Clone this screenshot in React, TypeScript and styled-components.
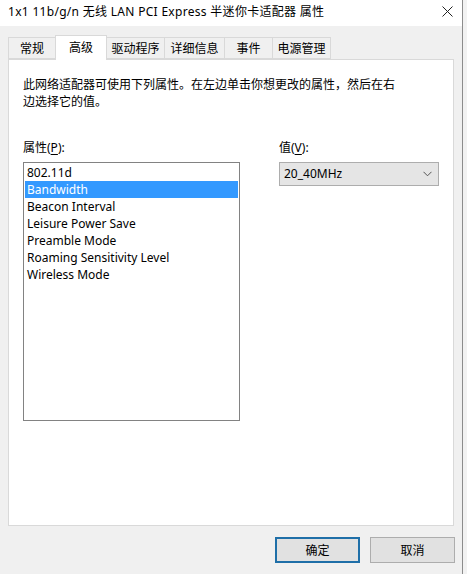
import React from "react";
import styled, { createGlobalStyle } from "styled-components";

const Global = createGlobalStyle`
  html, body { margin: 0; padding: 0; background: #f0f0f0; }
  body {
    font-family: "Segoe UI", "Noto Sans", "Noto Sans CJK SC", sans-serif;
    font-size: 12px;
    color: #000;
  }
  * { box-sizing: border-box; }
`;

const Screen = styled.div`
  width: 467px;
  height: 574px;
  display: flex;
  overflow: hidden;
`;

const Dialog = styled.div`
  width: 462px;
  height: 574px;
  display: flex;
  flex-direction: column;
  background: #f0f0f0;
`;

const Beyond = styled.div`
  flex: 1;
  border-left: 1px solid #8c8c8c;
  background: #f2f2f2;
`;

const TitleBar = styled.div`
  height: 26px;
  flex: none;
  background: #fff;
  display: flex;
  align-items: center;
  justify-content: space-between;
  padding: 0 9px 2px 8px;
`;

const Title = styled.span`
  font-size: 12px;
  letter-spacing: 0.3px;
  line-height: 16px;
  white-space: nowrap;
`;

const CloseIcon = styled.svg`
  display: block;
  width: 11px;
  height: 11px;
  margin-bottom: 2px;
`;

const Body = styled.div`
  flex: 1;
  display: flex;
  flex-direction: column;
`;

const TabRow = styled.div`
  height: 33px;
  flex: none;
  display: flex;
  align-items: flex-end;
  padding-left: 8px;
  position: relative;
  z-index: 1;
`;

const Tab = styled.div<{ $w: number; $active?: boolean }>`
  width: ${(p) => p.$w}px;
  height: ${(p) => (p.$active ? 25 : 22)}px;
  margin-left: -1px;
  margin-bottom: ${(p) => (p.$active ? -1 : 0)}px;
  display: flex;
  align-items: center;
  justify-content: center;
  padding-bottom: ${(p) => (p.$active ? 3 : 0)}px;
  border: 1px solid #d9d9d9;
  border-bottom: ${(p) => (p.$active ? "none" : "1px solid #d9d9d9")};
  background: ${(p) => (p.$active ? "#fff" : "#f0f0f0")};
  font-size: 12px;
  white-space: nowrap;
  &:first-child { margin-left: 0; }
`;

const Panel = styled.div`
  margin: 0 8px 0 8px;
  height: 467px;
  flex: none;
  background: #fff;
  border: 1px solid #d9d9d9;
  padding: 16px 14px 0 14px;
  display: flex;
  flex-direction: column;
`;

const Description = styled.p`
  margin: 0;
  width: 376px;
  line-height: 17px;
`;

const Columns = styled.div`
  margin-top: 29px;
  display: flex;
  gap: 39px;
`;

const Column = styled.div<{ $w: number }>`
  width: ${(p) => p.$w}px;
  display: flex;
  flex-direction: column;
  gap: 6px;
`;

const Label = styled.div`
  line-height: 17px;
  u { text-decoration: underline; text-underline-offset: 2px; }
`;

const ListBox = styled.div`
  height: 259px;
  border: 1px solid #828282;
  padding: 1px;
  background: #fff;
`;

const ListItem = styled.div<{ $selected?: boolean }>`
  height: 17px;
  line-height: 17px;
  padding-left: 2px;
  white-space: nowrap;
  background: ${(p) => (p.$selected ? "#3399ff" : "transparent")};
  color: ${(p) => (p.$selected ? "#fff" : "#000")};
`;

const Select = styled.div`
  height: 24px;
  border: 1px solid #adadad;
  background: #e5e5e5;
  display: flex;
  align-items: center;
  justify-content: space-between;
  padding: 0 6px 1px 4px;
`;

const Chevron = styled.svg`
  display: block;
  width: 9px;
  height: 6px;
`;

const ButtonBar = styled.div`
  flex: 1;
  display: flex;
  justify-content: flex-end;
  align-items: flex-start;
  gap: 10px;
  padding: 11px 7px 0 0;
`;

const Button = styled.button<{ $default?: boolean }>`
  width: 85px;
  height: 26px;
  font: inherit;
  font-size: 12px;
  color: #000;
  background: #e1e1e1;
  border: ${(p) => (p.$default ? "2px solid #1f6fa8" : "1px solid #adadad")};
  padding: 0 0 1px;
  cursor: default;
`;

const tabs = [
  { label: "常规", w: 48 },
  { label: "高级", w: 52, active: true },
  { label: "驱动程序", w: 59 },
  { label: "详细信息", w: 61 },
  { label: "事件", w: 49 },
  { label: "电源管理", w: 59 },
];

const properties = [
  "802.11d",
  "Bandwidth",
  "Beacon Interval",
  "Leisure Power Save",
  "Preamble Mode",
  "Roaming Sensitivity Level",
  "Wireless Mode",
];

export default function App() {
  return (
    <Screen>
      <Global />
      <Dialog>
        <TitleBar>
          <Title>1x1 11b/g/n 无线 LAN PCI Express 半迷你卡适配器 属性</Title>
          <CloseIcon viewBox="0 0 11 11">
            <path d="M0.5 0.5 L10.5 10.5 M10.5 0.5 L0.5 10.5" stroke="#222" strokeWidth="1" fill="none" />
          </CloseIcon>
        </TitleBar>
        <Body>
          <TabRow>
            {tabs.map((t) => (
              <Tab key={t.label} $w={t.w} $active={t.active}>
                {t.label}
              </Tab>
            ))}
          </TabRow>
          <Panel>
            <Description>
              此网络适配器可使用下列属性。在左边单击你想更改的属性，然后在右边选择它的值。
            </Description>
            <Columns>
              <Column $w={217}>
                <Label>
                  属性(<u>P</u>):
                </Label>
                <ListBox>
                  {properties.map((p) => (
                    <ListItem key={p} $selected={p === "Bandwidth"}>
                      {p}
                    </ListItem>
                  ))}
                </ListBox>
              </Column>
              <Column $w={160}>
                <Label>
                  值(<u>V</u>):
                </Label>
                <Select>
                  <span>20_40MHz</span>
                  <Chevron viewBox="0 0 9 6">
                    <path d="M0.5 0.8 L4.5 4.8 L8.5 0.8" stroke="#555" strokeWidth="1" fill="none" />
                  </Chevron>
                </Select>
              </Column>
            </Columns>
          </Panel>
          <ButtonBar>
            <Button $default>确定</Button>
            <Button>取消</Button>
          </ButtonBar>
        </Body>
      </Dialog>
      <Beyond />
    </Screen>
  );
}
